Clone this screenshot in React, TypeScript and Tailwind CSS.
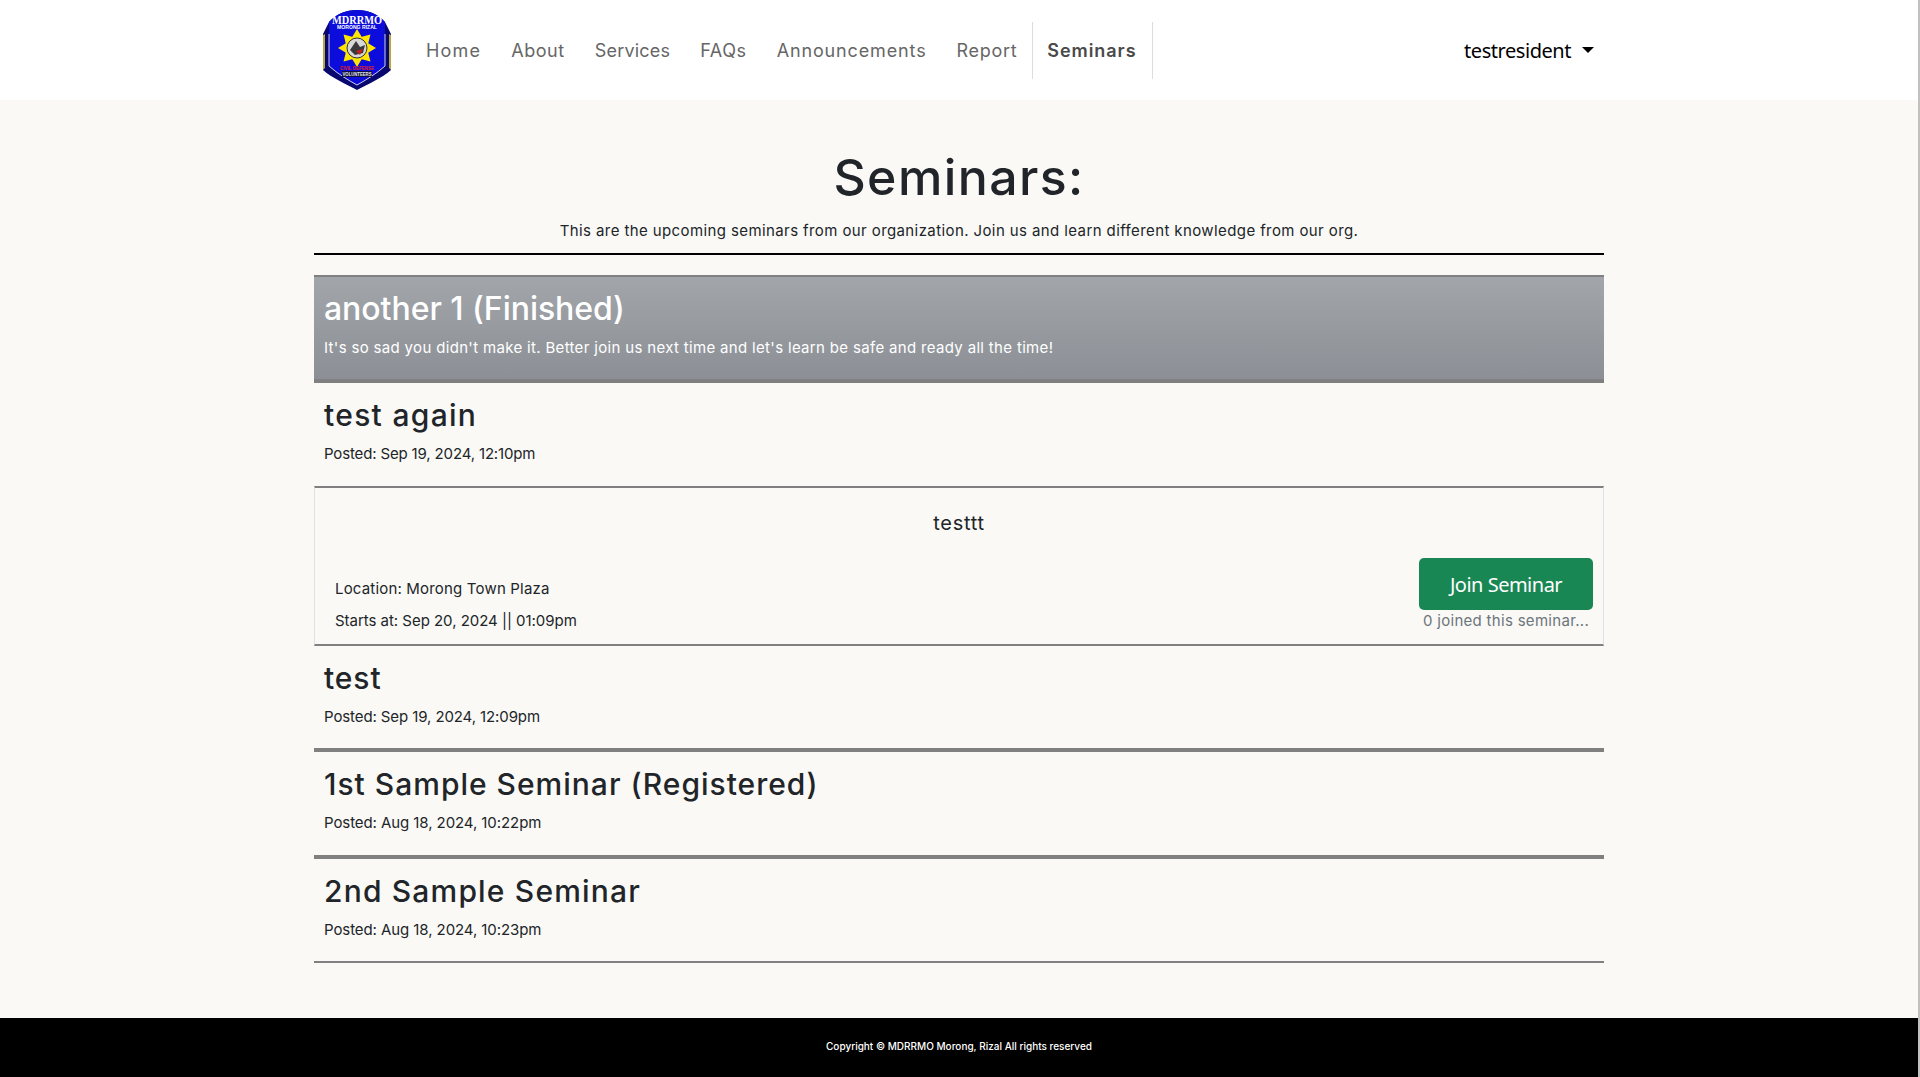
const font = "font-['Inter','Liberation_Sans',sans-serif]"

const navLinks = [
  { label: 'Home', cls: 'tracking-[1.2px]' },
  { label: 'About', cls: 'tracking-[0.55px]' },
  { label: 'Services', cls: 'tracking-[0.2px]' },
  { label: 'FAQs', cls: 'tracking-[0.6px]' },
  { label: 'Announcements', cls: 'tracking-[0.86px]' },
  { label: 'Report', cls: 'tracking-[0.7px]' },
]

function Logo() {
  const rays = [0, 45, 90, 135, 180, 225, 270, 315]
  return (
    <svg viewBox="0 0 70 80" className="h-[80px] w-[70px] shrink-0">
      {/* outer shield */}
      <path d="M35 0 C46 0 56 4 63 12 L69 24 L69 60 C60 68 46 74 35 80 C24 74 10 68 1 60 L1 24 L7 12 C14 4 24 0 35 0Z" fill="#08086e" />
      <path d="M1 25 L3 24 L3 58 L1 60Z" fill="#b8a640" />
      <path d="M69 25 L67 24 L67 58 L69 60Z" fill="#b8a640" />
      <path d="M35 0 C46 0 56 4 63 12 L63 56 C54 64 44 70 35 75 C26 70 16 64 7 56 L7 12 C14 4 24 0 35 0Z" fill="#0c0cdc" />
      <path d="M7 24 L7 56 C16 64 26 70 35 75 C44 70 54 64 63 56 L63 24" fill="none" stroke="#ffffff" strokeWidth="0.8" />
      <text x="35" y="14" textAnchor="middle" fontSize="12" fontWeight="700" fill="#ffffff" fontFamily="'Liberation Serif', serif" textLength="50" lengthAdjust="spacingAndGlyphs">MDRRMO</text>
      <text x="35" y="18.5" textAnchor="middle" fontSize="5" fontWeight="700" fill="#ffffff" fontFamily="'Liberation Sans', sans-serif" textLength="40" lengthAdjust="spacingAndGlyphs">MORONG RIZAL</text>
      {/* sun and seal */}
      <g transform="translate(35 38)">
        {rays.map((r) => (
          <g key={r} transform={`rotate(${r})`}>
            <path d="M-6 -9 L0 -19 L6 -9Z" fill="#ffe600" />
          </g>
        ))}
        <circle r="12" fill="#ffe600" />
        <circle r="10" fill="#d8d8d8" stroke="#333333" strokeWidth="1" />
        <path d="M-7 2 L-1 -7 L3 -1 L8 -3 L6 5 L-2 7Z" fill="#3a3a3a" />
        <path d="M-1 3 L6 1 L3 7Z" fill="#c02020" />
      </g>
      <text x="35" y="60" textAnchor="middle" fontSize="5" fontWeight="700" fill="#e02020" fontFamily="'Liberation Sans', sans-serif" textLength="34" lengthAdjust="spacingAndGlyphs">CIVIL DEFENSE</text>
      <rect x="20" y="61" width="30" height="6" fill="#101040" />
      <text x="35" y="66" textAnchor="middle" fontSize="4.8" fontWeight="700" fill="#e8e8e8" fontFamily="'Liberation Sans', sans-serif" textLength="29" lengthAdjust="spacingAndGlyphs">VOLUNTEERS</text>
    </svg>
  )
}

function Header() {
  return (
    <header className="flex h-[100px] bg-white pl-[322px] pr-[326px]">
      <div className="flex h-full items-center">
        <Logo />
      </div>
      <nav className="ml-[19px] flex items-center">
        {navLinks.map((l) => (
          <a key={l.label} className={`px-[15px] text-[18px] text-[#666666] ${l.cls}`}>
            {l.label}
          </a>
        ))}
        <a className="flex h-[57px] items-center border-x border-[#dddddd] pl-[14px] pr-[15px] text-[18px] font-semibold text-[#4a4a4a] tracking-[0.95px]">
          Seminars
        </a>
      </nav>
      <div className="ml-auto flex items-center gap-[11px] font-['Noto_Sans',sans-serif] text-[20px] tracking-[-0.45px] text-black">
        <span className="pt-[2px]">testresident</span>
        <span className="h-0 w-0 border-x-[6px] border-t-[6px] border-x-transparent border-t-black" />
      </div>
    </header>
  )
}

function PostHeader({ title, posted, box, track, dateTrack }: { title: string; posted: string; box: string; track: string; dateTrack: string }) {
  return (
    <div className={`px-[10px] pt-[13px] ${box}`}>
      <h2 className={`text-[30px] font-medium leading-[38px] text-[#212529] ${track}`}>{title}</h2>
      <p className={`mt-[9px] text-[15px] leading-[22px] text-[#212529] ${dateTrack}`}>{posted}</p>
    </div>
  )
}

function JoinCard() {
  return (
    <div className="h-[160px] border-x border-y-2 border-x-[#dee2e6] border-y-[#808080]">
      <p className="pt-[20px] text-center text-[20px] leading-[30px] text-[#212529] tracking-[0.7px]">testtt</p>
      <div className="flex items-end justify-between pl-[20px] pr-[10px] pt-[20px]">
        <div className="text-[15px] text-[#212529]">
          <p className="leading-[22px] tracking-[0.18px]">Location: Morong Town Plaza</p>
          <p className="mt-[10px] leading-[22px] tracking-[-0.03px]">Starts at: Sep 20, 2024 || 01:09pm</p>
        </div>
        <div className="flex w-[174px] flex-col items-center">
          <button className="h-[52px] w-full rounded-[5px] bg-[#198754] pt-[2px] font-['Noto_Sans',sans-serif] text-[20px] tracking-[-0.5px] text-white">
            Join Seminar
          </button>
          <span className="text-[15px] leading-[22px] tracking-[0.3px] text-[#6c757d]">0 joined this seminar...</span>
        </div>
      </div>
    </div>
  )
}

export default function App() {
  return (
    <div className={`relative flex min-h-[1077px] flex-col bg-[#faf9f5] ${font}`}>
      <Header />
      <main className="mx-[314px] flex-1 pr-[2px]">
        <div className="w-[1290px]">
          <h1 className="pt-[44px] text-center text-[50px] font-medium leading-[66px] text-[#212529] tracking-[1.4px]">Seminars:</h1>
          <p className="mt-[9px] text-center text-[15px] leading-[24px] text-[#212529] tracking-[0.4px]">
            This are the upcoming seminars from our organization. Join us and learn different knowledge from our org.
          </p>
          <div className="mt-[10px] h-[2px] bg-black" />
          <div className="mt-[20px] h-[108px] border-t-2 border-b-4 border-t-[#808080] border-b-[#808080] bg-gradient-to-b from-[#a2a6aa] to-[#8c9096] px-[10px] pt-[12px] text-white">
            <h2 className="text-[32px] font-medium leading-[40px] tracking-[-0.05px]">another 1 (Finished)</h2>
            <p className="mt-[8px] text-[15px] leading-[22px] tracking-[0.33px]">
              It's so sad you didn't make it. Better join us next time and let's learn be safe and ready all the time!
            </p>
          </div>
          <PostHeader title="test again" posted="Posted: Sep 19, 2024, 12:10pm" box="h-[103px]" track="tracking-[1.3px]" dateTrack="tracking-[-0.15px]" />
          <JoinCard />
          <PostHeader title="test" posted="Posted: Sep 19, 2024, 12:09pm" box="h-[106px] border-b-4 border-b-[#808080]" track="tracking-[0.9px]" dateTrack="tracking-[-0.1px]" />
          <PostHeader title="1st Sample Seminar (Registered)" posted="Posted: Aug 18, 2024, 10:22pm" box="h-[107px] border-b-4 border-b-[#808080]" track="tracking-[1px]" dateTrack="tracking-[-0.08px]" />
          <PostHeader title="2nd Sample Seminar" posted="Posted: Aug 18, 2024, 10:23pm" box="h-[104px] border-b-2 border-b-[#808080]" track="tracking-[1.18px]" dateTrack="tracking-[-0.08px]" />
        </div>
      </main>
      <footer className="flex h-[59px] items-center justify-center bg-black pb-[3px] pr-[2px] text-[10px] font-medium text-white">
        Copyright © MDRRMO Morong, Rizal All rights reserved
      </footer>
      <div className="absolute right-0 top-0 h-full w-[2px] bg-[#c1c1c1]" />
    </div>
  )
}
